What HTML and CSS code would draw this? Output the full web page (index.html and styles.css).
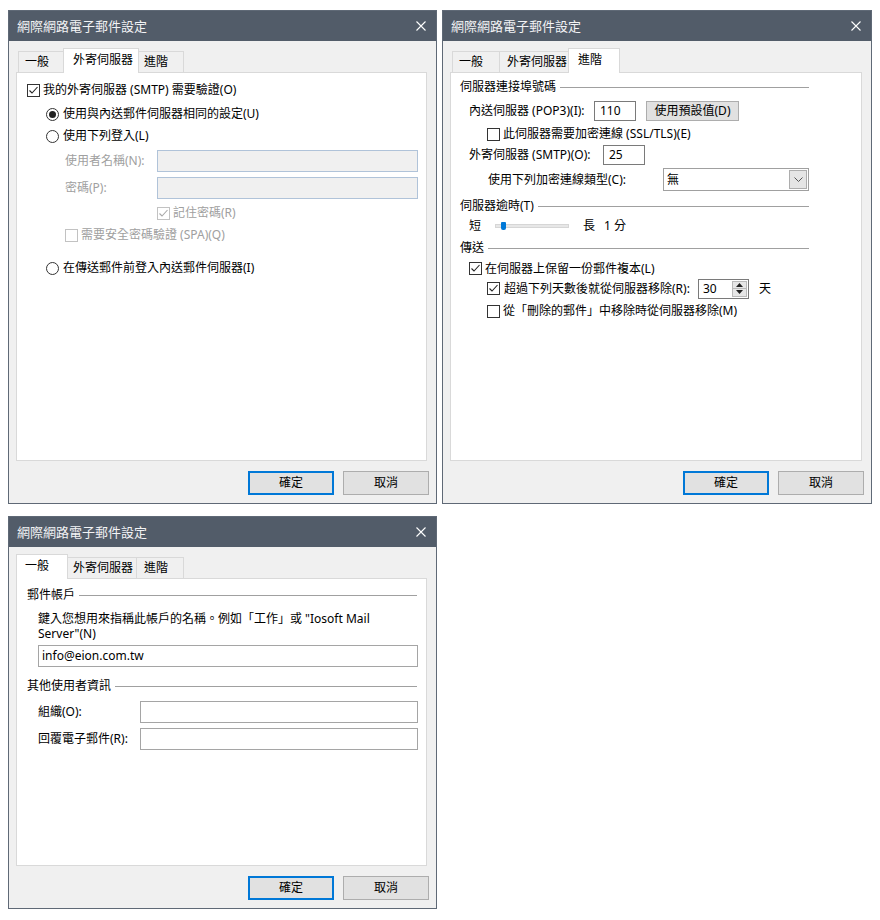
FILE: index.html
```html
<!DOCTYPE html>
<html lang="zh-Hant">
<head>
<meta charset="utf-8">
<title>網際網路電子郵件設定</title>
<link rel="stylesheet" href="styles.css">
</head>
<body>
<div class="screen">

  <!-- Dialog 1: 外寄伺服器 -->
  <section class="dlg dlg-left">
    <header class="titlebar">
      <span class="title">網際網路電子郵件設定</span>
      <svg class="close" width="10" height="10" viewBox="0 0 10 10"><path d="M0.5 0.5L9.5 9.5M9.5 0.5L0.5 9.5" stroke="#fff" stroke-width="1.1" fill="none"/></svg>
    </header>
    <div class="body">
      <div class="tabs">
        <div class="tab t1">一般</div>
        <div class="tab t2 active">外寄伺服器</div>
        <div class="tab t3">進階</div>
      </div>
      <div class="panel panel-tall panel-out">
        <div class="line out-auth">
          <span class="cb"><svg viewBox="0 0 11 11"><polyline points="1.5,5.5 4,8 9.5,2" /></svg></span>
          <span>我的外寄伺服器 (SMTP) 需要驗證(O)</span>
        </div>
        <div class="line out-same">
          <span class="rb on"></span>
          <span>使用與內送郵件伺服器相同的設定(U)</span>
        </div>
        <div class="line out-login">
          <span class="rb"></span>
          <span>使用下列登入(L)</span>
        </div>
        <div class="line field out-user">
          <span class="flabel dis">使用者名稱(N):</span>
          <span class="inp inp-dis"></span>
        </div>
        <div class="line field out-pwd">
          <span class="flabel dis">密碼(P):</span>
          <span class="inp inp-dis"></span>
        </div>
        <div class="line out-remember">
          <span class="cb cb-dis"><svg viewBox="0 0 11 11"><polyline points="1.5,5.5 4,8 9.5,2" /></svg></span>
          <span class="dis">記住密碼(R)</span>
        </div>
        <div class="line out-spa">
          <span class="cb cb-dis"></span>
          <span class="dis">需要安全密碼驗證 (SPA)(Q)</span>
        </div>
        <div class="line out-before">
          <span class="rb"></span>
          <span>在傳送郵件前登入內送郵件伺服器(I)</span>
        </div>
      </div>
      <div class="actions">
        <div class="btn default">確定</div>
        <div class="btn">取消</div>
      </div>
    </div>
  </section>

  <!-- Dialog 2: 進階 -->
  <section class="dlg dlg-right">
    <header class="titlebar">
      <span class="title">網際網路電子郵件設定</span>
      <svg class="close" width="10" height="10" viewBox="0 0 10 10"><path d="M0.5 0.5L9.5 9.5M9.5 0.5L0.5 9.5" stroke="#fff" stroke-width="1.1" fill="none"/></svg>
    </header>
    <div class="body">
      <div class="tabs">
        <div class="tab t1">一般</div>
        <div class="tab t2">外寄伺服器</div>
        <div class="tab t3 active">進階</div>
      </div>
      <div class="panel panel-tall panel-adv">
        <div class="adv">
          <div class="group adv-h1"><span>伺服器連接埠號碼</span><span class="rule"></span></div>
          <div class="line adv-pop">
            <span class="lbl-pop">內送伺服器 (POP3)(I):</span>
            <span class="inp inp-num">110</span>
            <span class="btn btn-default-val">使用預設值(D)</span>
          </div>
          <div class="line adv-ssl">
            <span class="cb"></span>
            <span>此伺服器需要加密連線 (SSL/TLS)(E)</span>
          </div>
          <div class="line adv-smtp">
            <span class="lbl-smtp">外寄伺服器 (SMTP)(O):</span>
            <span class="inp inp-num">25</span>
          </div>
          <div class="line adv-enc">
            <span class="lbl-enc">使用下列加密連線類型(C):</span>
            <span class="select">
              <span class="select-val">無</span>
              <span class="select-btn"><svg width="9" height="5" viewBox="0 0 9 5"><polyline points="0.5,0.5 4.5,4.5 8.5,0.5" fill="none" stroke="#555" stroke-width="1"/></svg></span>
            </span>
          </div>
          <div class="group adv-h2"><span>伺服器逾時(T)</span><span class="rule"></span></div>
          <div class="line adv-timeout">
            <span>短</span>
            <span class="track"><span class="thumb"></span></span>
            <span>長</span>
            <span class="tval">1 分</span>
          </div>
          <div class="group adv-h3"><span>傳送</span><span class="rule"></span></div>
          <div class="line adv-keep">
            <span class="cb"><svg viewBox="0 0 11 11"><polyline points="1.5,5.5 4,8 9.5,2" /></svg></span>
            <span>在伺服器上保留一份郵件複本(L)</span>
          </div>
          <div class="line adv-days">
            <span class="cb"><svg viewBox="0 0 11 11"><polyline points="1.5,5.5 4,8 9.5,2" /></svg></span>
            <span class="lbl-days">超過下列天數後就從伺服器移除(R):</span>
            <span class="spin">
              <span class="spin-val">30</span>
              <span class="spin-btns">
                <span class="spin-b"><svg width="7" height="4" viewBox="0 0 7 4"><polygon points="3.5,0 7,4 0,4" fill="#222"/></svg></span>
                <span class="spin-b"><svg width="7" height="4" viewBox="0 0 7 4"><polygon points="0,0 7,0 3.5,4" fill="#222"/></svg></span>
              </span>
            </span>
            <span class="unit">天</span>
          </div>
          <div class="line adv-del">
            <span class="cb"></span>
            <span>從「刪除的郵件」中移除時從伺服器移除(M)</span>
          </div>
        </div>
      </div>
      <div class="actions">
        <div class="btn default">確定</div>
        <div class="btn">取消</div>
      </div>
    </div>
  </section>

  <!-- Dialog 3: 一般 -->
  <section class="dlg dlg-left">
    <header class="titlebar">
      <span class="title">網際網路電子郵件設定</span>
      <svg class="close" width="10" height="10" viewBox="0 0 10 10"><path d="M0.5 0.5L9.5 9.5M9.5 0.5L0.5 9.5" stroke="#fff" stroke-width="1.1" fill="none"/></svg>
    </header>
    <div class="body">
      <div class="tabs">
        <div class="tab t1 active">一般</div>
        <div class="tab t2">外寄伺服器</div>
        <div class="tab t3">進階</div>
      </div>
      <div class="panel panel-short panel-gen">
        <div class="group gen-h1"><span>郵件帳戶</span><span class="rule"></span></div>
        <p class="gen-desc">鍵入您想用來指稱此帳戶的名稱。例如「工作」或 "Iosoft Mail<br>Server"(N)</p>
        <div class="inp inp-wide">info@eion.com.tw</div>
        <div class="group gen-h2"><span>其他使用者資訊</span><span class="rule"></span></div>
        <div class="line gen-field gen-org">
          <span class="glabel">組織(O):</span>
          <span class="inp inp-flex"></span>
        </div>
        <div class="line gen-field gen-reply">
          <span class="glabel">回覆電子郵件(R):</span>
          <span class="inp inp-flex"></span>
        </div>
      </div>
      <div class="actions">
        <div class="btn default">確定</div>
        <div class="btn">取消</div>
      </div>
    </div>
  </section>

</div>
</body>
</html>
```

FILE: styles.css
```css
* { box-sizing: border-box; }

html, body {
  margin: 0;
  padding: 0;
  background: #ffffff;
}

body {
  font-family: "Noto Sans", "Noto Sans CJK TC", sans-serif;
  font-size: 12px;
  line-height: 16px;
  color: #000;
}

.screen {
  display: grid;
  grid-template-columns: 429px 430px;
  column-gap: 5px;
  row-gap: 12px;
  padding: 10px 0 0 8px;
  align-items: start;
}

/* ---------- dialog frame ---------- */
.dlg {
  border: 1px solid #5f6976;
  background: #f0f0f0;
}

.titlebar {
  height: 30px;
  background: #525c69;
  display: flex;
  align-items: center;
  justify-content: space-between;
  padding: 0 10px 0 8px;
}

.title {
  color: #f2f3f5;
  font-size: 13px;
  line-height: 16px;
}

.close { display: block; }

.body {
  padding: 7px 9px 8px 7px;
}

/* ---------- tabs ---------- */
.tabs {
  display: flex;
  align-items: flex-end;
  height: 24px;
  padding-left: 2px;
}

.tab {
  position: relative;
  height: 21px;
  border: 1px solid #d9d9d9;
  border-bottom: 0;
  background: #f0f0f0;
  line-height: 19px;
  white-space: nowrap;
}

.tab + .tab { margin-left: -1px; }

.tab.t1 { width: 48px; padding-left: 6px; }
.tab.t2 { width: 72px; padding-left: 7px; }
.tab.t3 { width: 48px; padding-left: 7px; }

.tab.active {
  z-index: 2;
  height: 25px;
  margin-bottom: -1px;
  background: #fff;
  padding-top: 1px;
  margin-right: -2px;
}
.tab.t1.active { width: 52px; padding-left: 8px; margin-left: -2px; }
.tab.t2.active { width: 76px; padding-left: 9px; margin-left: -3px; }
.tab.t3.active { width: 52px; padding-left: 9px; margin-left: -3px; }

/* ---------- panels ---------- */
.panel {
  background: #fff;
  border: 1px solid #d9d9d9;
}

.panel-tall { height: 389px; }
.panel-short { height: 288px; }

.panel-out { padding: 0 8px 0 10px; }
.panel-adv { padding: 0 0 0 9px; }
.panel-gen { padding: 0 9px 0 10px; }

/* ---------- generic rows & controls ---------- */
.line {
  display: flex;
  align-items: center;
  height: 22px;
  white-space: nowrap;
}

.dis { color: #a0a0a0; }

.cb {
  flex: none;
  width: 13px;
  height: 13px;
  border: 1px solid #333;
  background: #fff;
  margin-right: 3px;
  display: flex;
}
.cb svg {
  width: 11px;
  height: 11px;
  fill: none;
  stroke: #222;
  stroke-width: 1.1;
}
.cb-dis { border-color: #c2c2c2; }
.cb-dis svg { stroke: #a8a8a8; }

.rb {
  flex: none;
  width: 13px;
  height: 13px;
  border: 1px solid #333;
  border-radius: 50%;
  background: #fff;
  margin-right: 4px;
  display: flex;
  align-items: center;
  justify-content: center;
}
.rb.on::after {
  content: "";
  width: 7px;
  height: 7px;
  border-radius: 50%;
  background: #222;
}

.inp {
  display: flex;
  align-items: center;
  background: #fff;
  border: 1px solid #a5a5a5;
  padding-left: 3px;
  white-space: nowrap;
}

.inp-dis {
  flex: 1;
  height: 22px;
  background: #f0f0f0;
  border-color: #b0c3d9;
}

.btn {
  width: 86px;
  height: 24px;
  border: 1px solid #adadad;
  background: #e1e1e1;
  display: flex;
  align-items: center;
  justify-content: center;
}
.btn.default { border: 2px solid #0078d7; }

.actions {
  display: flex;
  justify-content: flex-end;
  gap: 9px;
  margin-top: 10px;
  margin-right: -2px;
}

.group {
  display: flex;
  align-items: center;
  height: 18px;
  white-space: nowrap;
}
.rule {
  flex: 1;
  height: 1px;
  background: #a0a0a0;
  margin-left: 4px;
}

/* ---------- dialog 1: outgoing server ---------- */
.out-auth { margin-top: 6px; }
.out-same { margin-top: 2px; padding-left: 19px; }
.out-login { padding-left: 19px; }
.out-user { margin-top: 3px; padding-left: 38px; }
.out-pwd { margin-top: 5px; padding-left: 38px; }
.flabel { width: 92px; flex: none; }
.out-remember { margin-top: 3px; padding-left: 130px; }
.out-spa { padding-left: 38px; }
.out-before { margin-top: 11px; padding-left: 19px; }

/* ---------- dialog 2: advanced ---------- */
.adv { width: 349px; }

.adv-h1 { margin-top: 5px; }
.adv-pop { margin-top: 4px; padding-left: 9px; }
.lbl-pop { width: 125px; flex: none; }
.inp-num {
  width: 42px;
  height: 20px;
  border-color: #7a7a7a;
  padding-left: 5px;
}
.btn-default-val {
  width: 93px;
  height: 20px;
  margin-left: 10px;
}
.adv-ssl { margin-top: 2px; height: 20px; padding-left: 27px; }
.adv-smtp { margin-top: 1px; height: 20px; padding-left: 9px; }
.lbl-smtp { width: 134px; flex: none; }
.adv-enc { margin-top: 3px; height: 23px; padding-left: 28px; }
.lbl-enc { width: 175px; flex: none; }

.select {
  width: 146px;
  height: 23px;
  border: 1px solid #a0a0a0;
  background: #fff;
  display: flex;
  align-items: center;
  justify-content: space-between;
  padding-left: 3px;
}
.select-btn {
  width: 18px;
  height: 19px;
  margin-right: 1px;
  border: 1px solid #adadad;
  background: #e5e5e5;
  display: flex;
  align-items: center;
  justify-content: center;
}

.adv-h2 { margin-top: 6px; }
.adv-timeout { margin-top: 1px; height: 20px; padding-left: 9px; }
.track {
  width: 74px;
  height: 4px;
  margin: 0 14px;
  background: #e7e7e7;
  border: 1px solid #d6d6d6;
  display: flex;
  align-items: center;
}
.thumb {
  width: 5px;
  height: 8px;
  margin-left: 5px;
  background: #0078d7;
  border-radius: 1px 1px 2px 2px;
  flex: none;
}
.tval { margin-left: 9px; }

.adv-h3 { margin-top: 3px; }
.adv-keep { margin-top: 2px; height: 19px; padding-left: 9px; }
.adv-days { height: 21px; padding-left: 27px; }
.adv-days .cb { margin-right: 4px; }
.lbl-days { width: 194px; flex: none; }
.spin {
  width: 51px;
  height: 20px;
  border: 1px solid #7a7a7a;
  background: #fff;
  display: flex;
  align-items: stretch;
}
.spin-val {
  flex: 1;
  padding-left: 4px;
  display: flex;
  align-items: center;
}
.spin-btns {
  width: 16px;
  display: flex;
  flex-direction: column;
  padding: 1px 1px 1px 0;
  gap: 0;
}
.spin-b {
  flex: 1;
  background: #e6e6e6;
  border: 1px solid #b9b9b9;
  display: flex;
  align-items: center;
  justify-content: center;
}
.spin-b + .spin-b { border-top: 0; }
.unit { margin-left: 10px; }
.adv-del { margin-top: 2px; height: 20px; padding-left: 27px; }

/* ---------- dialog 3: general ---------- */
.gen-h1 { margin-top: 7px; }
.gen-desc {
  margin: 7px 0 0 11px;
  line-height: 15px;
  white-space: nowrap;
}
.inp-wide {
  margin: 4px -1px 0 11px;
  height: 22px;
  padding-left: 3px;
}
.gen-h2 { margin-top: 10px; }
.gen-field { padding-left: 11px; margin-right: -1px; }
.gen-org { margin-top: 6px; }
.gen-reply { margin-top: 5px; }
.glabel { width: 102px; flex: none; }
.inp-flex { flex: 1; height: 22px; }
```
